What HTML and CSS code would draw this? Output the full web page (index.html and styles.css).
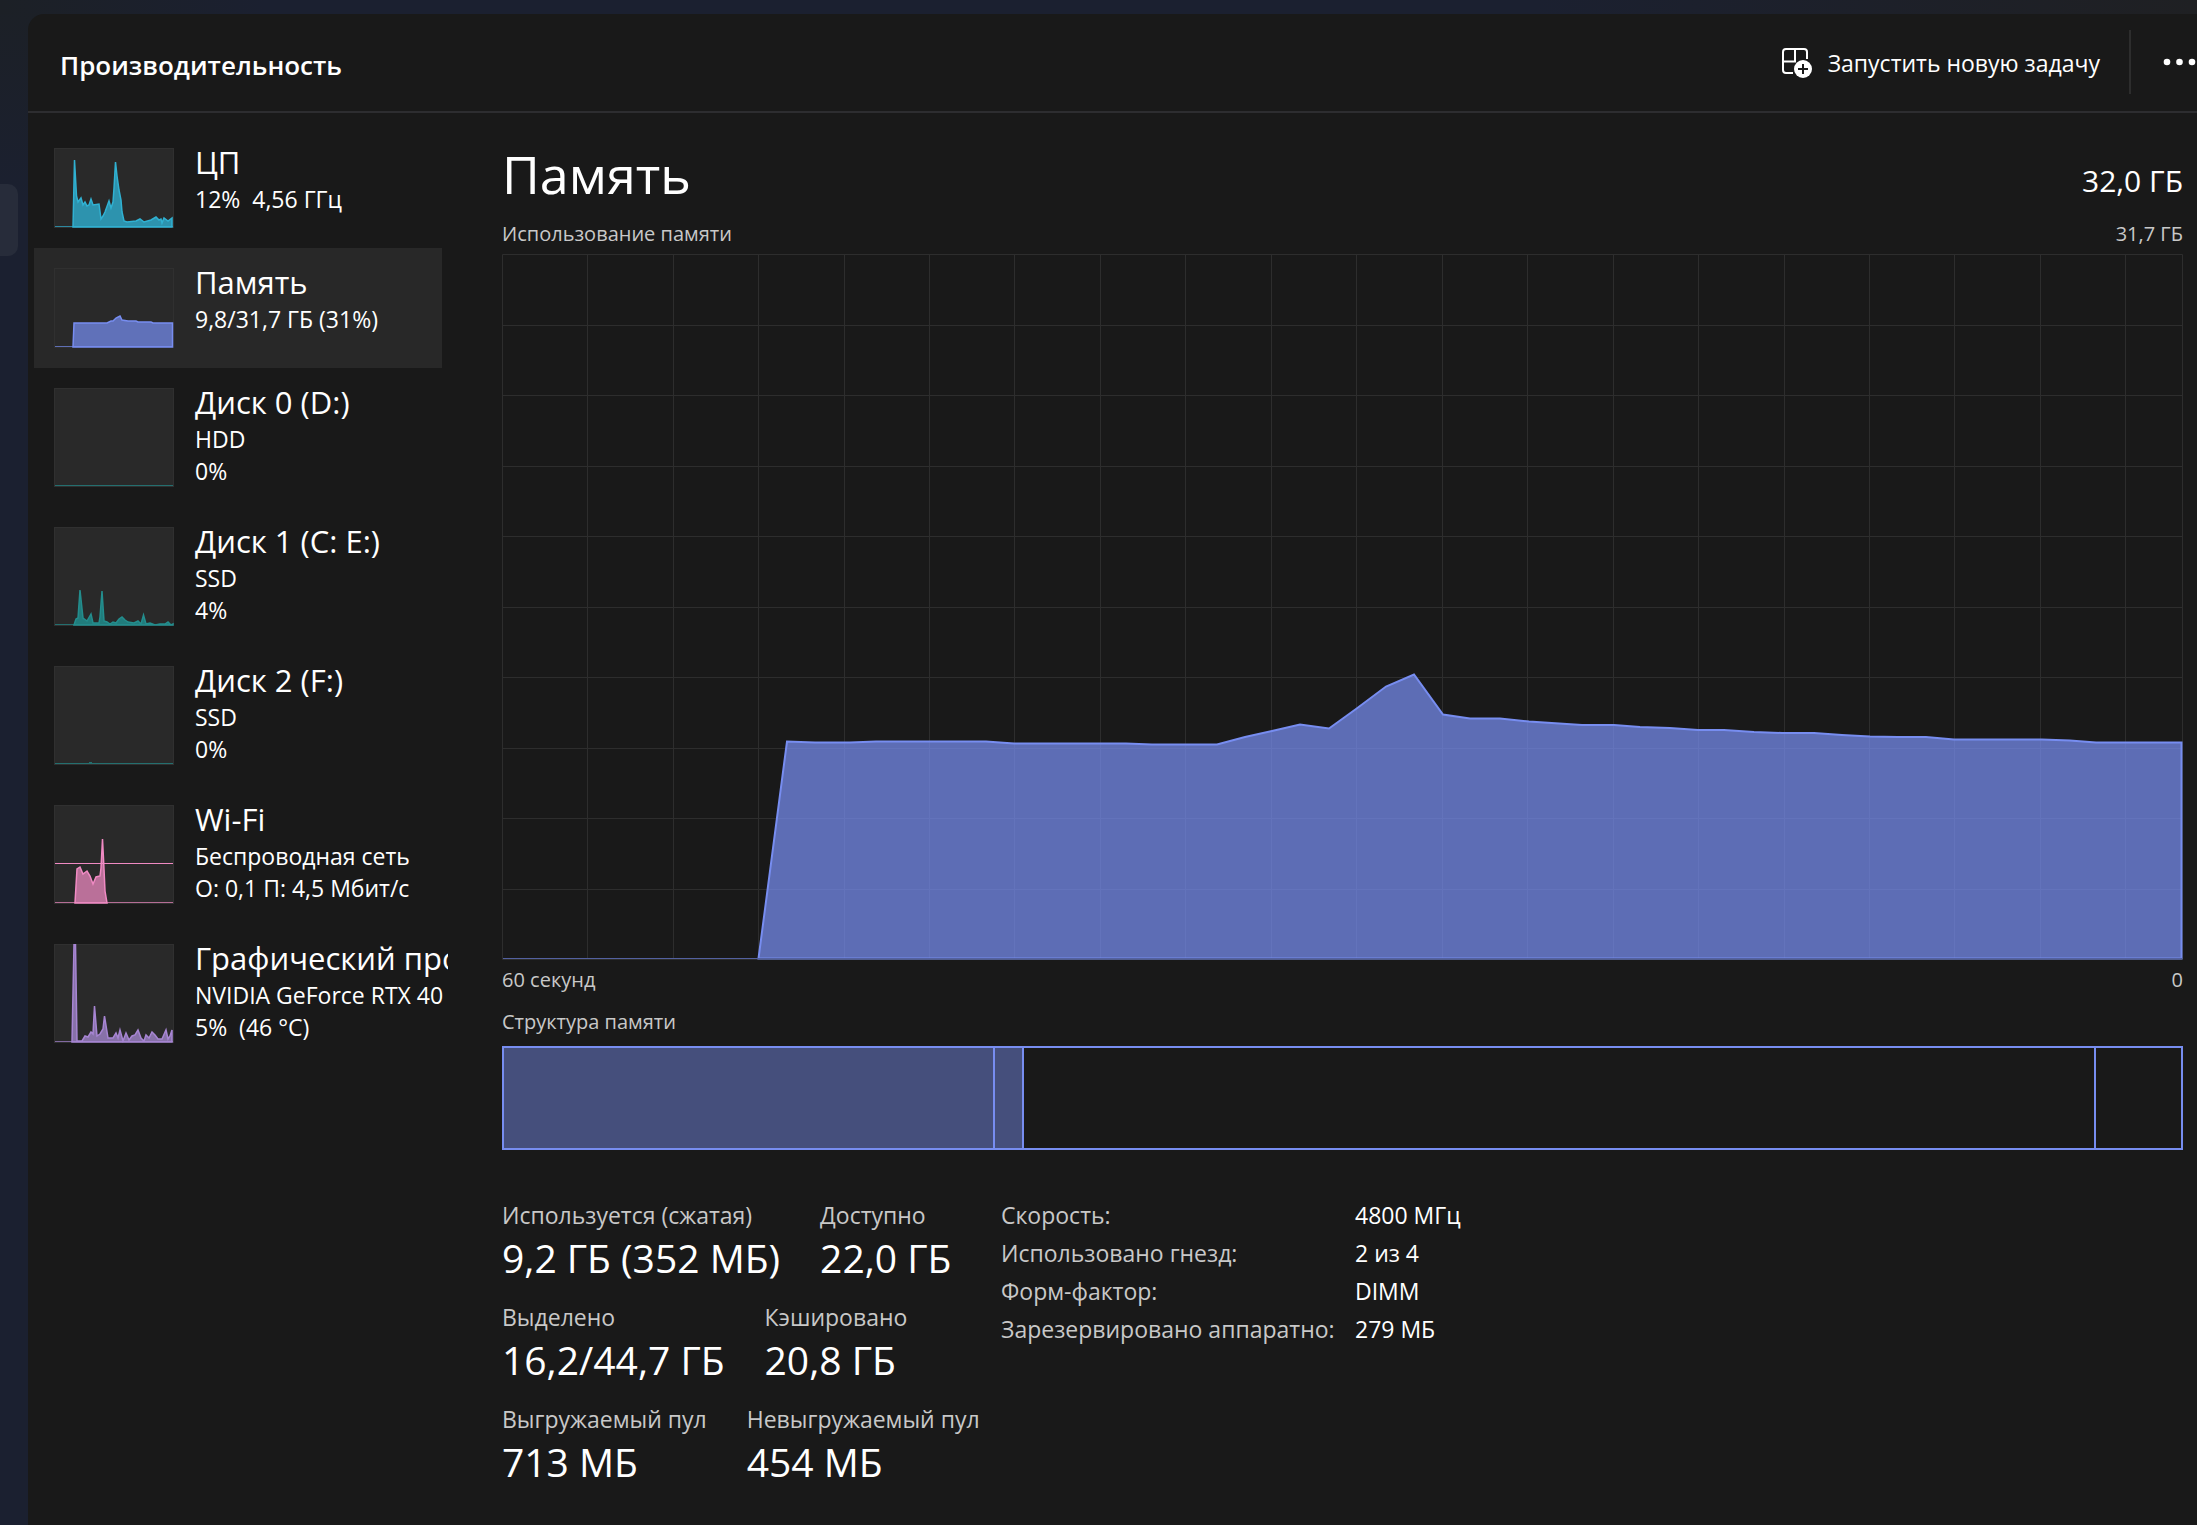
FILE: index.html
```html
<!DOCTYPE html>
<html lang="ru">
<head>
<meta charset="utf-8">
<title>Производительность</title>
<link rel="stylesheet" href="styles.css">
</head>
<body>
<div class="app">
  <nav class="rail" aria-label="Разделы"><button class="rail-item" type="button" aria-label="Производительность"></button></nav>
  <div class="window">
    <header class="topbar">
      <h1 class="page-title">Производительность</h1>
      <div class="actions">
        <button class="run-task" type="button">
          <svg class="run-icon" viewBox="0 0 30 30" width="30" height="30" aria-hidden="true">
            <path d="M25 11V4a3 3 0 0 0-3-3H4a3 3 0 0 0-3 3v18a3 3 0 0 0 3 3h7M13 1v12.500M1 13.500h13" fill="none" stroke="#fff" stroke-width="2"/>
            <circle cx="21" cy="21" r="9" fill="#fff"/>
            <path d="M21 16v10M16 21h10" stroke="#191919" stroke-width="2"/>
          </svg>
          <span>Запустить новую задачу</span>
        </button>
        <span class="divider"></span>
        <button class="more" type="button" aria-label="Дополнительно">
          <svg viewBox="0 0 33 8" width="33" height="8" aria-hidden="true"><g fill="#fff"><circle cx="4" cy="4" r="3.300"/><circle cx="16.500" cy="4" r="3.300"/><circle cx="29" cy="4" r="3.300"/></g></svg>
        </button>
      </div>
    </header>
    <div class="content">
      <nav class="devices" aria-label="Устройства">
        <a class="device" href="#cpu">
          <svg class="thumb short" viewBox="0 0 120 80" aria-hidden="true"><path class="cpu" d="M19 79L20.500 12L22.500 48L24 54L27 50L29 57L31 54L33 58L35 57L37 51L39 57L45 56L47 71L49 68L51 64L55 53L57 60L59 54L60 40L61.500 14L63 28L65 42L67 52L68 64L70 73L73 74L82 73L86 71L90 74L97 72L102 69L105 72L107 71L108 75L110 70L114 73L118 70V79z"/><path class="cpu base" d="M1 78.500H119"/></svg>
          <span class="info"><strong>ЦП</strong><span>12%&nbsp; 4,56 ГГц</span></span>
        </a>
        <a class="device selected" href="#memory" aria-current="page">
          <svg class="thumb short" viewBox="0 0 120 80" aria-hidden="true"><path class="mem" d="M19 79L20 55H53L57 53H59L62 50L66 48L68 52L74 53H82L84 54H97L99 55H118.500V79z"/><path class="mem base" d="M1 78.500H119"/></svg>
          <span class="info"><strong>Память</strong><span>9,8/31,7 ГБ (31%)</span></span>
        </a>
        <a class="device" href="#disk0">
          <svg class="thumb" viewBox="0 0 120 99" aria-hidden="true"><path class="disk base" d="M1 97.500H119"/></svg>
          <span class="info"><strong>Диск 0 (D:)</strong><span>HDD</span><span>0%</span></span>
        </a>
        <a class="device" href="#disk1">
          <svg class="thumb" viewBox="0 0 120 99" aria-hidden="true"><path class="disk" d="M20 98L22 92L24 91L26 63L29 91L33 94L37 87L39 96H45L46 90L48 64L50 94L53 95L56 97L59 95L62 96L65 92L68 90L71 93L74 95L80 96L84 94L87 97L89.500 88L92 97L96 96L101 98L106 97L111 97L114 95L117 98L119 97V98z"/><path class="disk base" d="M1 97.500H119"/></svg>
          <span class="info"><strong>Диск 1 (C: E:)</strong><span>SSD</span><span>4%</span></span>
        </a>
        <a class="device" href="#disk2">
          <svg class="thumb" viewBox="0 0 120 99" aria-hidden="true"><path class="disk base" d="M1 97.500H119M35 96.500H38"/></svg>
          <span class="info"><strong>Диск 2 (F:)</strong><span>SSD</span><span>0%</span></span>
        </a>
        <a class="device" href="#wifi">
          <svg class="thumb" viewBox="0 0 120 99" aria-hidden="true"><path class="wifi" d="M21 98L23 64L26 62L29 69L33 66L36 71L39 79L42 72L46 71L47 63L48.500 34L50 64L51 86L53 98z"/><path class="wifi level" d="M1 58.500H119"/><path class="wifi base" d="M1 97.500H119"/></svg>
          <span class="info"><strong>Wi-Fi</strong><span>Беспроводная сеть</span><span>О: 0,1 П: 4,5 Мбит/с</span></span>
        </a>
        <a class="device" href="#gpu">
          <svg class="thumb" viewBox="0 0 120 99" aria-hidden="true"><path class="gpu" d="M18 98L20 0H21.500L23 97H28L31 92L34 93L37 88L39 90L40.500 62L43 92L46 90L49 85L50.500 72L54 94L59 94L62 89L64 94L66 86L69 97L72 89L75 96L78 92L81 91L84 86L87 94L90 97L92 91L95 94L98 88L101 91L104 95L108 95L112 86L114 95L116 92L118 86V98z"/><path class="gpu base" d="M1 97.500H119"/></svg>
          <span class="info"><strong>Графический про</strong><span>NVIDIA GeForce RTX 40</span><span>5%&nbsp; (46 °C)</span></span>
        </a>
      </nav>
      <main class="details">
        <div class="row heading"><h2>Память</h2><span class="total">32,0 ГБ</span></div>
        <div class="row caption above"><span>Использование памяти</span><span>31,7 ГБ</span></div>
        <svg class="chart" viewBox="0 0 1681 706" preserveAspectRatio="none" role="img" aria-label="Использование памяти">
          <path class="grid" d="M85.500 0V705M171.500 0V705M256.500 0V705M342.500 0V705M427.500 0V705M512.500 0V705M598.500 0V705M683.500 0V705M769.500 0V705M854.500 0V705M940.500 0V705M1025.500 0V705M1111.500 0V705M1196.500 0V705M1282.500 0V705M1367.500 0V705M1452.500 0V705M1538.500 0V705M1623.500 0V705M0 71.500H1681M0 141.500H1681M0 212.500H1681M0 282.500H1681M0 353.500H1681M0 423.500H1681M0 494.500H1681M0 564.500H1681M0 635.500H1681M.500 .500H1680.500V705.500H.500z"/>
          <path class="area" d="M256.500 704.500L285 487.500L313 488.500H348L374 487.500H484L512 489.500H624L650 490.500H715L743 483L770 477L798 470.500L827 474.500L854 455L884 432.500L912 420.500L941 460.500L968 464.500H998L1027 467.500L1080 471H1112L1138 473L1168 474L1196 476H1222L1252 478L1280 479H1312L1340 481L1368 482.500L1396 483H1424L1452 485.500H1540L1568 486.500L1594 488.500H1679.500V704.500z"/>
          <path class="zero" d="M1 704.500H1680"/>
        </svg>
        <div class="row caption below"><span>60 секунд</span><span>0</span></div>
        <div class="caption composition-title">Структура памяти</div>
        <div class="composition">
          <div class="seg used"></div><div class="seg used"></div><div class="seg"></div><div class="seg"></div>
        </div>
        <div class="stats">
          <div class="counters">
            <dl class="pair"><div><dt>Используется (сжатая)</dt><dd>9,2 ГБ (352 МБ)</dd></div><div><dt>Доступно</dt><dd>22,0 ГБ</dd></div></dl>
            <dl class="pair"><div><dt>Выделено</dt><dd>16,2/44,7 ГБ</dd></div><div><dt>Кэшировано</dt><dd>20,8 ГБ</dd></div></dl>
            <dl class="pair"><div><dt>Выгружаемый пул</dt><dd>713 МБ</dd></div><div><dt>Невыгружаемый пул</dt><dd>454 МБ</dd></div></dl>
          </div>
          <table class="specs">
            <tr><th scope="row">Скорость:</th><td>4800 МГц</td></tr>
            <tr><th scope="row">Использовано гнезд:</th><td>2 из 4</td></tr>
            <tr><th scope="row">Форм-фактор:</th><td>DIMM</td></tr>
            <tr><th scope="row">Зарезервировано аппаратно:</th><td>279 МБ</td></tr>
          </table>
        </div>
      </main>
    </div>
  </div>
</div>
</body>
</html>
```
FILE: styles.css
```css
* { box-sizing: border-box; }
body { margin: 0; background: #1b2030; color: #fff; font-family: "Open Sans", "Noto Sans", sans-serif; font-size: 23px; }
h1, h2, dl, dd { margin: 0; font-weight: 400; }
button { border: 0; background: none; color: inherit; font: inherit; padding: 0; }
svg { display: block; }
.app { display: flex; min-height: 100vh; padding-top: 14px; overflow: hidden; background: linear-gradient(90deg, #1c2026, #1b2030 12%, #1b2030 70%, #1f2023) top / 100% 14px no-repeat, linear-gradient(#1c2026, #1b2030 200px); }
.rail { flex: 0 0 28px; padding-top: 170px; }
.rail-item { display: block; width: 18px; height: 72px; background: #272c3a; border-radius: 0 10px 10px 0; }
.window { flex: 1; min-width: 0; background: #191919; border-top-left-radius: 16px; }
.topbar { display: flex; justify-content: space-between; height: 99px; border-bottom: 2px solid #2d2d30; padding-left: 32px; }
.page-title { font-size: 26px; font-weight: 600; line-height: 102px; }
.actions { display: flex; align-items: center; height: 96px; }
.run-task { display: flex; align-items: center; gap: 16px; height: 64px; padding-top: 2px; font-size: 23px; }
.divider { width: 2px; height: 64px; margin: 0 32px 0 29px; background: #2d2d2d; }
.more { width: 34px; overflow: hidden; }
.content { display: flex; }
.devices { flex: 0 0 414px; padding: 15px 0 0 6px; }
.device { display: flex; gap: 20px; width: 408px; padding: 20px 0 20px 20px; color: #fff; text-decoration: none; }
.selected { background: #282828; }
.thumb { flex: none; width: 120px; height: 99px; background: #292929; box-shadow: inset 0 0 0 1px #303030; }
.thumb.short { height: 80px; }
.thumb path { stroke-width: 1.500; }
.info { display: flex; flex-direction: column; width: 254px; margin-right: -6px; padding-left: 1px; overflow-x: clip; white-space: nowrap; font-size: 23px; line-height: 32px; }
.info strong { padding-bottom: 7px; font-size: 31px; font-weight: 400; line-height: 28px; }
.cpu { fill: #2d93ae; stroke: #30b1d2; }
.mem { fill: #6071b9; stroke: #778df0; }
.disk { fill: #217c7c; stroke: #238d8d; }
.wifi { fill: #ba7099; stroke: #f08ac3; }
.gpu { fill: #8771a8; stroke: #a785d3; }
.thumb .base { stroke-width: 1; opacity: .7; }
.thumb .level { stroke-width: 1; }
.details { flex: 1; min-width: 0; padding: 15px 14px 0 60px; }
.row { display: flex; justify-content: space-between; }
.heading { height: 92px; }
.heading h2 { font-size: 52px; line-height: 92px; }
.total { font-size: 30px; line-height: 106px; }
.caption { color: #c8c8c8; font-size: 20px; line-height: 28px; }
.above { height: 34px; }
.chart { width: 100%; height: 706px; }
.grid { fill: none; stroke: #2d2d2d; stroke-width: 1; }
.area { fill: #778df0; fill-opacity: .73; stroke: #778df0; stroke-width: 2; }
.zero { stroke: #5361a0; stroke-width: 1; }
.below { padding-top: 6px; }
.composition-title { padding-top: 14px; }
.composition { display: grid; grid-template-columns: 491fr 29fr 1072fr 85fr; height: 104px; margin-top: 10px; border: 2px solid #778df0; }
.seg { border-right: 2px solid #778df0; }
.seg:last-child { border-right: 0; }
.used { background: #454f7c; }
.stats { display: flex; padding-top: 46px; }
.counters { width: 499px; }
.pair { display: flex; gap: 40px; height: 102px; white-space: nowrap; }
dt, th { color: #c8c8c8; font-weight: 400; }
dt { font-size: 23px; line-height: 38px; }
dd { font-size: 39px; line-height: 48px; }
.specs { align-self: flex-start; border-collapse: collapse; font-size: 23px; line-height: 38px; text-align: left; white-space: nowrap; }
.specs th { padding: 0; width: 354px; }
.specs td { padding: 0; }
```
